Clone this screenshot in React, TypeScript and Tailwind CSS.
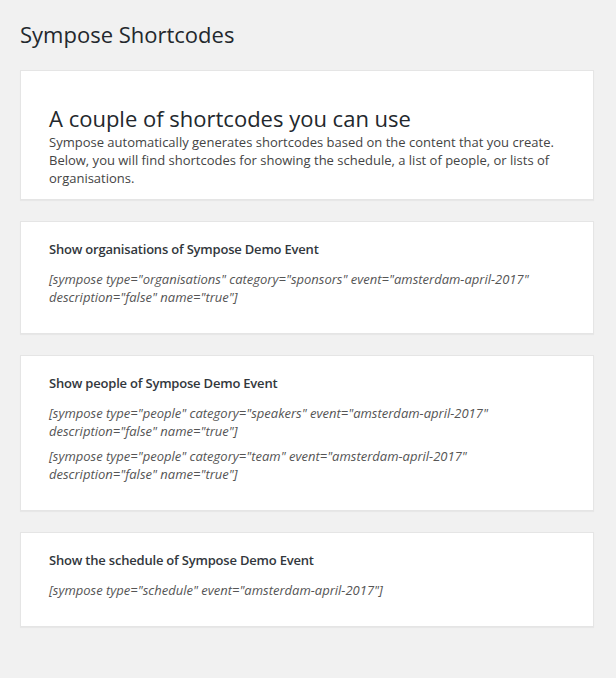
import React from 'react';

interface Section {
  title: string;
  codes: string[];
}

const sections: Section[] = [
  {
    title: 'Show organisations of Sympose Demo Event',
    codes: ['[sympose type="organisations" category="sponsors" event="amsterdam-april-2017" description="false" name="true"]'],
  },
  {
    title: 'Show people of Sympose Demo Event',
    codes: [
      '[sympose type="people" category="speakers" event="amsterdam-april-2017" description="false" name="true"]',
      '[sympose type="people" category="team" event="amsterdam-april-2017" description="false" name="true"]',
    ],
  },
  {
    title: 'Show the schedule of Sympose Demo Event',
    codes: ['[sympose type="schedule" event="amsterdam-april-2017"]'],
  },
];

const Card = ({ children, className = '' }: { children: React.ReactNode; className?: string }) => (
  <div className={`bg-white border border-[#e5e5e5] shadow-[0_1px_1px_rgba(0,0,0,0.04)] ${className}`}>{children}</div>
);

const App = () => {
  return (
    <div className="min-h-[678px] bg-[#f1f1f1] px-5 pt-[20px] pb-10 font-['Open_Sans',sans-serif] text-[#444]">
      <h1 className="text-[22px] leading-[1.3] text-[#23282d] font-normal mb-[21px]">Sympose Shortcodes</h1>

      <div className="flex flex-col gap-[21px] w-[574px]">
        {/* Intro */}
        <Card className="px-[28px] pt-[34px] pb-[12px]">
          <h2 className="text-[22px] leading-[26px] text-[#23282d] mb-[2px]">A couple of shortcodes you can use</h2>
          <p className="text-[13px] leading-[18px] text-[#444]">
            Sympose automatically generates shortcodes based on the content that you create. Below, you will find
            shortcodes for showing the schedule, a list of people, or lists of organisations.
          </p>
        </Card>

        {sections.map((s) => (
          <Card key={s.title} className="px-[28px] pt-[18px] pb-[27px]">
            <h3 className="text-[13px] leading-[18px] font-semibold tracking-[-0.2px] text-[#32373c] mb-[12px]">{s.title}</h3>
            <div className="flex flex-col gap-[7px]">
              {s.codes.map((c, i) => (
                <p key={i} className="text-[13px] leading-[18px] italic text-[#555]">
                  {c}
                </p>
              ))}
            </div>
          </Card>
        ))}
      </div>
    </div>
  );
};

export default App;
